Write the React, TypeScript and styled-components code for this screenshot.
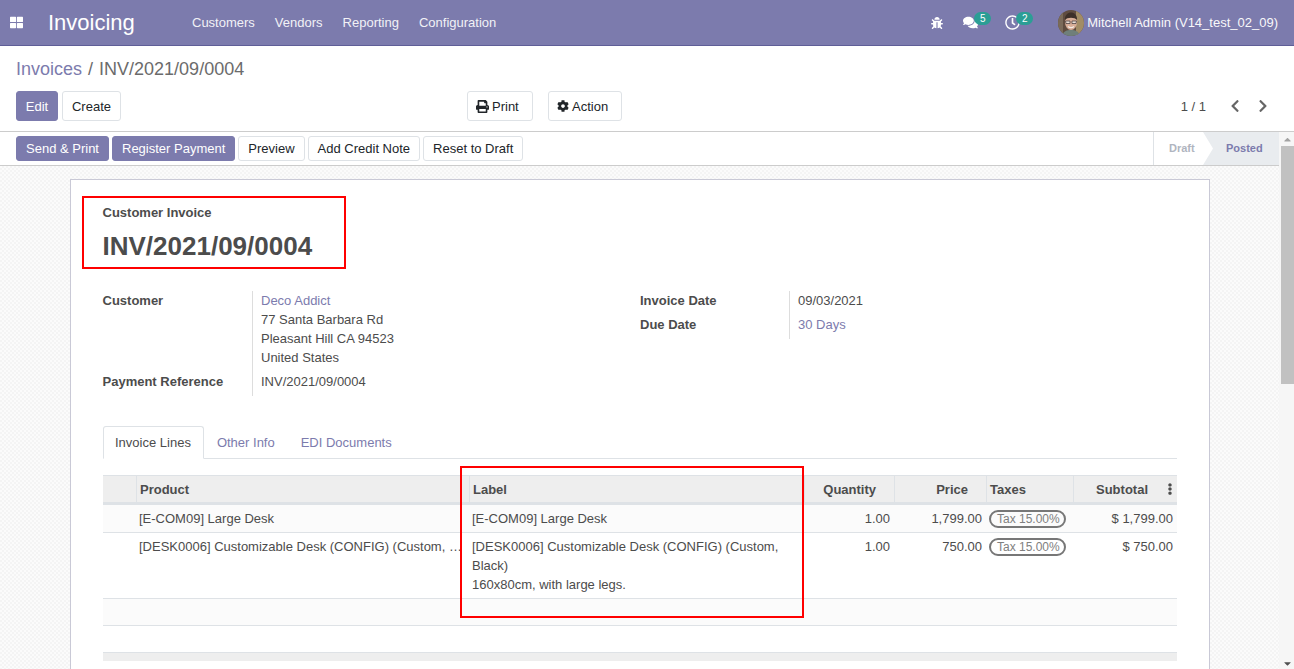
import { createGlobalStyle } from 'styled-components';
import styled from 'styled-components';
import {
  FaBug,
  FaCaretDown,
  FaCaretUp,
  FaChevronLeft,
  FaChevronRight,
  FaCog,
  FaComments,
  FaEllipsisV,
  FaPrint,
  FaRegClock,
  FaThLarge,
} from 'react-icons/fa';

const GlobalStyle = createGlobalStyle`
  html, body {
    margin: 0;
    height: 100%;
    overflow: hidden;
  }
  body {
    font-family: "Liberation Sans", Arial, sans-serif;
    font-size: 13px;
    line-height: 19px;
    color: #4c4c4c;
    background: #fff;
  }
  * { box-sizing: border-box; }
`;

const menus = ['Customers', 'Vendors', 'Reporting', 'Configuration'];

const lines = [
  {
    product: '[E-COM09] Large Desk',
    label: ['[E-COM09] Large Desk'],
    price: '1,799.00',
    subtotal: '$ 1,799.00',
  },
  {
    product: '[DESK0006] Customizable Desk (CONFIG) (Custom, Black)',
    label: ['[DESK0006] Customizable Desk (CONFIG) (Custom, Black)', '160x80cm, with large legs.'],
    price: '750.00',
    subtotal: '$ 750.00',
  },
];

function Avatar() {
  return (
    <svg width="26" height="26" viewBox="0 0 26 26">
      <defs>
        <clipPath id="face-clip">
          <circle cx="13" cy="13" r="13" />
        </clipPath>
      </defs>
      <g clipPath="url(#face-clip)">
        <rect width="26" height="26" fill="#5e4a3a" />
        <rect x="18" width="8" height="26" fill="#a58d62" />
        <rect width="5" height="26" fill="#7a6a55" />
        <path d="M4 26c1-5 5-6 9-6s8 1 9 6z" fill="#6f8078" />
        <ellipse cx="13" cy="12.5" rx="6" ry="7.5" fill="#dcb096" />
        <path d="M7 10c-.5-5 3-7.500 6-7.500s6.500 2.500 6 7.500c-2-3-10-3-12 0z" fill="#3a2c22" />
        <path d="M7.500 11h4.500v2.500H8zM14 11h4.500l-.5 2.500h-4z" fill="#efe4d8" stroke="#3a3230" strokeWidth=".7" />
        <path d="M10 16.500c2 1.500 4 1.500 6 0" stroke="#fbf2e8" strokeWidth="1.200" fill="none" />
      </g>
    </svg>
  );
}

export default function App() {
  return (
    <Page>
      <GlobalStyle />
      <NavBar>
        <AppsIcon>
          <FaThLarge size={13} />
        </AppsIcon>
        <Brand>Invoicing</Brand>
        <MenuList>
          {menus.map((menu) => (
            <MenuItem key={menu}>{menu}</MenuItem>
          ))}
        </MenuList>
        <Systray>
          <TrayIcon $width={32}>
            <FaBug size={12} />
          </TrayIcon>
          <TrayIcon $width={42}>
            <FaComments size={15} />
            <Counter>5</Counter>
          </TrayIcon>
          <TrayIcon $width={43}>
            <FaRegClock size={15} />
            <Counter>2</Counter>
          </TrayIcon>
          <UserMenu>
            <Avatar />
            <span>Mitchell Admin (V14_test_02_09)</span>
          </UserMenu>
        </Systray>
      </NavBar>

      <ControlPanel>
        <Breadcrumb>
          <CrumbLink>Invoices</CrumbLink>
          <CrumbSeparator>/</CrumbSeparator>
          <span>INV/2021/09/0004</span>
        </Breadcrumb>
        <ControlRow>
          <MainButtons>
            <Button $primary $height={30} $width={42}>Edit</Button>
            <Button $height={30} $width={59}>Create</Button>
          </MainButtons>
          <ActionButtons>
            <IconButton $height={30} $width={66}>
              <FaPrint size={13} />
              Print
            </IconButton>
            <IconButton $height={30} $width={74}>
              <FaCog size={12} />
              Action
            </IconButton>
          </ActionButtons>
          <Pager>
            <span>1 / 1</span>
            <PagerArrows>
              <FaChevronLeft size={14} />
              <FaChevronRight size={14} />
            </PagerArrows>
          </Pager>
        </ControlRow>
      </ControlPanel>

      <ScrollArea>
        <ScrollContent>
          <StatusBar>
            <StatusButtons>
              <Button $primary $height={25}>Send &amp; Print</Button>
              <Button $primary $height={25}>Register Payment</Button>
              <Button $height={25}>Preview</Button>
              <Button $height={25}>Add Credit Note</Button>
              <Button $height={25}>Reset to Draft</Button>
            </StatusButtons>
            <StatusSteps>
              <DraftStep>Draft</DraftStep>
              <PostedStep>Posted</PostedStep>
            </StatusSteps>
          </StatusBar>

          <SheetArea>
            <Sheet>
              <TitleBox>
                <InvoiceType>Customer Invoice</InvoiceType>
                <InvoiceName>INV/2021/09/0004</InvoiceName>
              </TitleBox>

              <Groups>
                <FieldGroup $labelWidth={149.5}>
                  <FieldLabel>Customer</FieldLabel>
                  <FieldValue>
                    <LinkText>Deco Addict</LinkText>
                    <br />
                    77 Santa Barbara Rd
                    <br />
                    Pleasant Hill CA 94523
                    <br />
                    United States
                  </FieldValue>
                  <FieldLabel>Payment Reference</FieldLabel>
                  <FieldValue>INV/2021/09/0004</FieldValue>
                </FieldGroup>
                <FieldGroup $labelWidth={149}>
                  <FieldLabel>Invoice Date</FieldLabel>
                  <FieldValue>09/03/2021</FieldValue>
                  <FieldLabel>Due Date</FieldLabel>
                  <FieldValue>
                    <LinkText>30 Days</LinkText>
                  </FieldValue>
                </FieldGroup>
              </Groups>

              <Tabs>
                <ActiveTab>Invoice Lines</ActiveTab>
                <Tab>Other Info</Tab>
                <Tab>EDI Documents</Tab>
              </Tabs>

              <LinesTable>
                <colgroup>
                  <col width={33} />
                  <col width={333} />
                  <col width={335} />
                  <col width={90} />
                  <col width={92} />
                  <col width={87} />
                  <col width={104} />
                </colgroup>
                <thead>
                  <tr>
                    <HeadCell />
                    <HeadCell>Product</HeadCell>
                    <HeadCell>Label</HeadCell>
                    <HeadCell $right $pad={18}>Quantity</HeadCell>
                    <HeadCell $right $pad={18}>Price</HeadCell>
                    <HeadCell>Taxes</HeadCell>
                    <HeadCell $right $pad={29}>
                      Subtotal
                      <ColumnsToggle>
                        <FaEllipsisV size={12} />
                      </ColumnsToggle>
                    </HeadCell>
                  </tr>
                </thead>
                <tbody>
                  {lines.map((line, index) => (
                    <LineRow key={line.product} $shaded={index === 0}>
                      <Cell />
                      <Cell>
                        <Ellipsis>{line.product}</Ellipsis>
                      </Cell>
                      <Cell>
                        {line.label.map((text) => (
                          <div key={text}>{text}</div>
                        ))}
                      </Cell>
                      <Cell $right>1.00</Cell>
                      <Cell $right>{line.price}</Cell>
                      <Cell>
                        <TaxBadge>Tax 15.00%</TaxBadge>
                      </Cell>
                      <Cell $right>{line.subtotal}</Cell>
                    </LineRow>
                  ))}
                  <BlankRow $shaded>
                    <td colSpan={7} />
                  </BlankRow>
                  <BlankRow>
                    <td colSpan={7} />
                  </BlankRow>
                </tbody>
                <tfoot>
                  <tr>
                    <FootCell colSpan={7} />
                  </tr>
                </tfoot>
              </LinesTable>

              <Highlight />
            </Sheet>
          </SheetArea>
        </ScrollContent>

        <ScrollBar>
          <FaCaretUp size={11} />
          <ScrollThumb />
          <ScrollEnd>
            <FaCaretDown size={11} />
          </ScrollEnd>
        </ScrollBar>
      </ScrollArea>
    </Page>
  );
}

const Page = styled.div`
  height: 100vh;
  display: flex;
  flex-direction: column;
  overflow: hidden;
`;

const NavBar = styled.header`
  height: 46px;
  flex: none;
  display: flex;
  align-items: center;
  padding-left: 10px;
  padding-right: 16px;
  background: #7c7bad;
  border-bottom: 1px solid #5f5e97;
  color: #fff;
`;
const AppsIcon = styled.span`
  width: 38px;
  display: flex;
`;
const Brand = styled.span`
  width: 144px;
  font-size: 22px;
`;
const MenuList = styled.nav`
  display: flex;
  gap: 20px;
`;
const MenuItem = styled.span`
  color: #fff;
  opacity: 0.9;
`;
const Systray = styled.div`
  margin-left: auto;
  display: flex;
  align-items: center;
`;
const TrayIcon = styled.span<{ $width: number }>`
  position: relative;
  width: ${(p) => p.$width}px;
  display: flex;
  align-items: center;
`;
const Counter = styled.span`
  position: absolute;
  left: 11px;
  top: -3px;
  width: 17px;
  height: 13px;
  border-radius: 7px;
  background: #2b9e95;
  color: #fff;
  font-size: 10px;
  line-height: 13px;
  text-align: center;
`;
const UserMenu = styled.span`
  display: flex;
  align-items: center;
  gap: 3px;
  margin-left: 10px;
  opacity: 0.95;
`;

const ControlPanel = styled.section`
  height: 86px;
  flex: none;
  padding: 13px 16px 0;
  border-bottom: 1px solid #ccc;
`;
const Breadcrumb = styled.div`
  height: 21px;
  font-size: 18px;
  line-height: 21px;
  color: #6b6b6b;
`;
const CrumbLink = styled.span`
  color: #7c7bad;
`;
const CrumbSeparator = styled.span`
  margin: 0 6px;
`;
const ControlRow = styled.div`
  display: flex;
  align-items: center;
  margin-top: 11px;
`;
const MainButtons = styled.div`
  width: 451px;
  display: flex;
  gap: 4px;
`;
const ActionButtons = styled.div`
  display: flex;
  gap: 15px;
`;
const Pager = styled.div`
  margin-left: auto;
  display: flex;
  align-items: center;
  gap: 22px;
  padding-right: 8px;
`;
const PagerArrows = styled.span`
  display: flex;
  gap: 14px;
  color: #666;
`;

const Button = styled.button<{
  $primary?: boolean;
  $height: number;
  $width?: number;
}>`
  height: ${(p) => p.$height}px;
  width: ${(p) => (p.$width ? `${p.$width}px` : 'auto')};
  padding: ${(p) => (p.$width ? '0' : '0 9px')};
  display: inline-flex;
  align-items: center;
  justify-content: center;
  font: inherit;
  border-radius: 3px;
  border: 1px solid ${(p) => (p.$primary ? '#7c7bad' : '#dee2e6')};
  background: ${(p) => (p.$primary ? '#7c7bad' : '#fff')};
  color: ${(p) => (p.$primary ? '#fff' : '#212529')};
`;
const IconButton = styled(Button)`
  justify-content: flex-start;
  gap: 3px;
  padding-left: 8px;
`;

const ScrollArea = styled.div`
  flex: 1;
  min-height: 0;
  display: flex;
`;
const ScrollContent = styled.main`
  flex: 1;
  min-width: 0;
  display: flex;
  flex-direction: column;
`;
const StatusBar = styled.div`
  height: 34px;
  flex: none;
  display: flex;
  justify-content: space-between;
  padding-left: 16px;
  border-bottom: 1px solid #ccc;
`;
const StatusButtons = styled.div`
  display: flex;
  align-items: center;
  gap: 3px;
`;
const StatusSteps = styled.div`
  display: flex;
  font-size: 11px;
  font-weight: 700;
`;
const DraftStep = styled.span`
  width: 50px;
  display: flex;
  align-items: center;
  padding-left: 15px;
  border-left: 1px solid #dee2e6;
  color: #b0b5c0;
`;
const PostedStep = styled.span`
  width: 76px;
  display: flex;
  align-items: center;
  padding-left: 23px;
  background: #e9ecef;
  color: #7c7bad;
  clip-path: polygon(0 0, 100% 0, 100% 100%, 0 100%, 10px 50%);
`;

const SheetArea = styled.div`
  flex: 1;
  min-height: 0;
  overflow: hidden;
  padding: 13px 69px 0 70px;
  background-color: #fbfbfb;
  background-image: conic-gradient(#f4f4f4 25%, transparent 0 50%, #f4f4f4 0 75%, transparent 0);
  background-size: 4px 4px;
`;
const Sheet = styled.article`
  position: relative;
  height: 600px;
  padding: 16px 32px 0;
  background: #fff;
  border: 1px solid #c9c9d6;
`;
const TitleBox = styled.div`
  width: 264px;
  height: 73px;
  margin-left: -21px;
  padding: 5px 0 0 18.5px;
  border: 2px solid #f00;
`;
const InvoiceType = styled.div`
  font-weight: 700;
`;
const InvoiceName = styled.h1`
  margin: 9px 0 0;
  font-size: 26px;
  line-height: 30px;
  font-weight: 700;
`;
const Groups = styled.div`
  display: grid;
  grid-template-columns: 537.5px 1fr;
  margin: 22px 0 0 -0.5px;
`;
const FieldGroup = styled.div<{ $labelWidth: number }>`
  display: grid;
  grid-template-columns: ${(p) => p.$labelWidth}px 1fr;
  align-content: start;
`;
const FieldLabel = styled.div`
  font-weight: 700;
`;
const FieldValue = styled.div`
  padding: 0 0 5px 8px;
  border-left: 1px solid #ddd;
`;
const LinkText = styled.span`
  color: #7c7bad;
`;

const Tabs = styled.div`
  display: flex;
  height: 33px;
  margin-top: 30px;
  border-bottom: 1px solid #dee2e6;
`;
const Tab = styled.span`
  height: 33px;
  padding: 6px 12px;
  color: #7c7bad;
  border: 1px solid transparent;
`;
const ActiveTab = styled(Tab)`
  padding: 6px 12px 6px 11px;
  color: #4c4c4c;
  background: #fff;
  border-color: #dee2e6 #dee2e6 #fff;
  border-radius: 3px 3px 0 0;
`;

const LinesTable = styled.table`
  width: 1074px;
  margin-top: 16px;
  table-layout: fixed;
  border-collapse: separate;
  border-spacing: 0;
`;
const HeadCell = styled.th<{ $right?: boolean; $pad?: number }>`
  position: relative;
  height: 30px;
  padding: 0 ${(p) => p.$pad ?? 3}px 0 3px;
  font-weight: 700;
  text-align: ${(p) => (p.$right ? 'right' : 'left')};
  background: #eee;
  border-top: 1px solid #dee2e6;
  border-bottom: 3px solid #dee2e6;
  border-left: 1px solid #dee2e6;
  &:first-child {
    border-left: 0;
  }
`;
const ColumnsToggle = styled.span`
  position: absolute;
  right: 1px;
  top: 5px;
  color: #4c4c4c;
`;
const LineRow = styled.tr<{ $shaded?: boolean }>`
  background: ${(p) => (p.$shaded ? '#fbfbfb' : '#fff')};
`;
const Cell = styled.td<{ $right?: boolean }>`
  padding: 4px ${(p) => (p.$right ? '4px' : '3px')} 4px 3px;
  vertical-align: top;
  text-align: ${(p) => (p.$right ? 'right' : 'left')};
  border-bottom: 1px solid #dee2e6;
`;
const Ellipsis = styled.div`
  white-space: nowrap;
  overflow: hidden;
  text-overflow: ellipsis;
`;
const TaxBadge = styled.span`
  display: inline-block;
  width: 77px;
  height: 18px;
  padding-left: 6px;
  border: 2px solid #777;
  border-radius: 9px;
  color: #808080;
  font-size: 12px;
  line-height: 14px;
  white-space: nowrap;
`;
const BlankRow = styled.tr<{ $shaded?: boolean }>`
  height: 27px;
  background: ${(p) => (p.$shaded ? '#fbfbfb' : '#fff')};
  td {
    border-bottom: 1px solid #dee2e6;
  }
`;
const FootCell = styled.td`
  height: 8px;
  background: #eee;
`;

const Highlight = styled.div`
  position: absolute;
  left: 389px;
  top: 286px;
  width: 344px;
  height: 152px;
  border: 2px solid #f00;
  pointer-events: none;
`;

const ScrollBar = styled.aside`
  width: 15px;
  flex: none;
  display: flex;
  flex-direction: column;
  align-items: center;
  padding: 2px 0 0 2px;
  background: #f6f6f6;
  color: #a3a3a3;
`;
const ScrollThumb = styled.div`
  width: 100%;
  height: 238px;
  margin-top: 1px;
  background: #c1c1c1;
`;
const ScrollEnd = styled.div`
  margin-top: auto;
  color: #505050;
  display: flex;
`;
